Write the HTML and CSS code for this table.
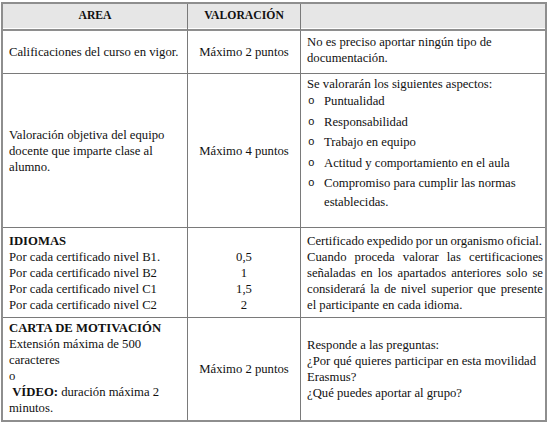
FILE: index.html
```html
<!DOCTYPE html>
<html lang="es">
<head>
<meta charset="utf-8">
<title>Criterios</title>
<link rel="stylesheet" href="styles.css">
</head>
<body>
<table class="grid">
  <colgroup>
    <col class="c1">
    <col class="c2">
    <col class="c3">
  </colgroup>
  <tr class="r-head">
    <th>AREA</th>
    <th>VALORACIÓN</th>
    <th class="last"></th>
  </tr>
  <tr class="r2">
    <td class="mid">Calificaciones del curso en vigor.</td>
    <td class="mid center">Máximo 2 puntos</td>
    <td class="last top p3">
      <div>No es preciso aportar ningún tipo de</div>
      <div>documentación.</div>
    </td>
  </tr>
  <tr class="r3">
    <td class="mid">
      <div>Valoración objetiva del equipo</div>
      <div>docente que imparte clase al</div>
      <div>alumno.</div>
    </td>
    <td class="mid center">Máximo 4 puntos</td>
    <td class="last top p2">
      <div class="intro">Se valorarán los siguientes aspectos:</div>
      <ul class="bullets">
        <li><span class="dot">o</span><span>Puntualidad</span></li>
        <li><span class="dot">o</span><span>Responsabilidad</span></li>
        <li><span class="dot">o</span><span>Trabajo en equipo</span></li>
        <li><span class="dot">o</span><span>Actitud y comportamiento en el aula</span></li>
        <li><span class="dot">o</span><span>Compromiso para cumplir las normas<br>establecidas.</span></li>
      </ul>
    </td>
  </tr>
  <tr class="r4">
    <td class="top p5 lines">
      <div><b>IDIOMAS</b></div>
      <div>Por cada certificado nivel B1.</div>
      <div>Por cada certificado nivel B2</div>
      <div>Por cada certificado nivel C1</div>
      <div>Por cada certificado nivel C2</div>
    </td>
    <td class="top p5 lines center">
      <div>&nbsp;</div>
      <div>0,5</div>
      <div>1</div>
      <div>1,5</div>
      <div>2</div>
    </td>
    <td class="last top p5 lines">
      <div class="tight">Certificado expedido por un organismo oficial.</div>
      <div class="jl">Cuando proceda valorar las certificaciones</div>
      <div class="jl">señaladas en los apartados anteriores solo se</div>
      <div class="jl">considerará la de nivel superior que presente</div>
      <div>el participante en cada idioma.</div>
    </td>
  </tr>
  <tr class="r5 lastrow">
    <td class="top p2 lines5">
      <div><b>CARTA DE MOTIVACIÓN</b></div>
      <div>Extensión máxima de 500</div>
      <div>caracteres</div>
      <div>o</div>
      <div>&nbsp;<b>VÍDEO:</b> duración máxima 2</div>
      <div>minutos.</div>
    </td>
    <td class="mid center">Máximo 2 puntos</td>
    <td class="last mid lines5">
      <div>Responde a las preguntas:</div>
      <div>¿Por qué quieres participar en esta movilidad</div>
      <div>Erasmus?</div>
      <div>¿Qué puedes aportar al grupo?</div>
    </td>
  </tr>
</table>
</body>
</html>
```

FILE: styles.css
```css
html, body {
  margin: 0;
  padding: 0;
  background: #ffffff;
}
body {
  padding: 2px 0 0 1px;
  font-family: "Liberation Serif", "Times New Roman", serif;
  font-size: 12.7px;
  color: #111111;
}
.grid {
  width: 546px;
  table-layout: fixed;
  border-collapse: separate;
  border-spacing: 0;
  border: 2px solid #8e8e8e;
}
col.c1 { width: 185px; }
col.c2 { width: 113px; }
col.c3 { width: 244px; }

.grid th, .grid td {
  padding: 0 6px;
  border-right: 1px solid #7a7a7a;
  border-bottom: 1px solid #7a7a7a;
  line-height: 16px;
  box-sizing: border-box;
  white-space: nowrap;
  overflow: hidden;
}
.grid td.last { padding: 0 2px 0 6px; }
.grid .last { border-right: none; }
.grid .lastrow td { border-bottom: none; }

.r-head th {
  background: #e6e6e6;
  font-weight: bold;
  font-size: 11.7px;
  text-align: center;
  vertical-align: middle;
  border-bottom: 2px solid #8e8e8e;
  box-shadow: inset 0 -1px 0 #ffffff;
  height: 27px;
  padding-bottom: 1px;
}
.r2 td { height: 43px; }
.r3 td { height: 154px; }
.r4 td { height: 90px; }
.r5 td { height: 102px; }

.mid { vertical-align: middle; }
.top { vertical-align: top; }
.center { text-align: center; }
.grid td.p2 { padding-top: 2px; }
.grid td.p3 { padding-top: 3px; }
.grid td.p5 { padding-top: 5px; }

.lines { line-height: 16px; }
.lines5 { line-height: 16.6px; }

.jl {
  text-align: justify;
  text-align-last: justify;
}
.tight { word-spacing: -0.6px; }

.intro { line-height: 16px; }
.bullets {
  list-style: none;
  margin: 0;
  padding: 0;
}
.bullets li {
  display: flex;
  line-height: 19px;
  margin-bottom: 1.6px;
}
.bullets .dot {
  flex: none;
  width: 17px;
  font-family: "Liberation Mono", "Courier New", monospace;
  font-size: 11px;
  padding-left: 1px;
  box-sizing: border-box;
}
```
